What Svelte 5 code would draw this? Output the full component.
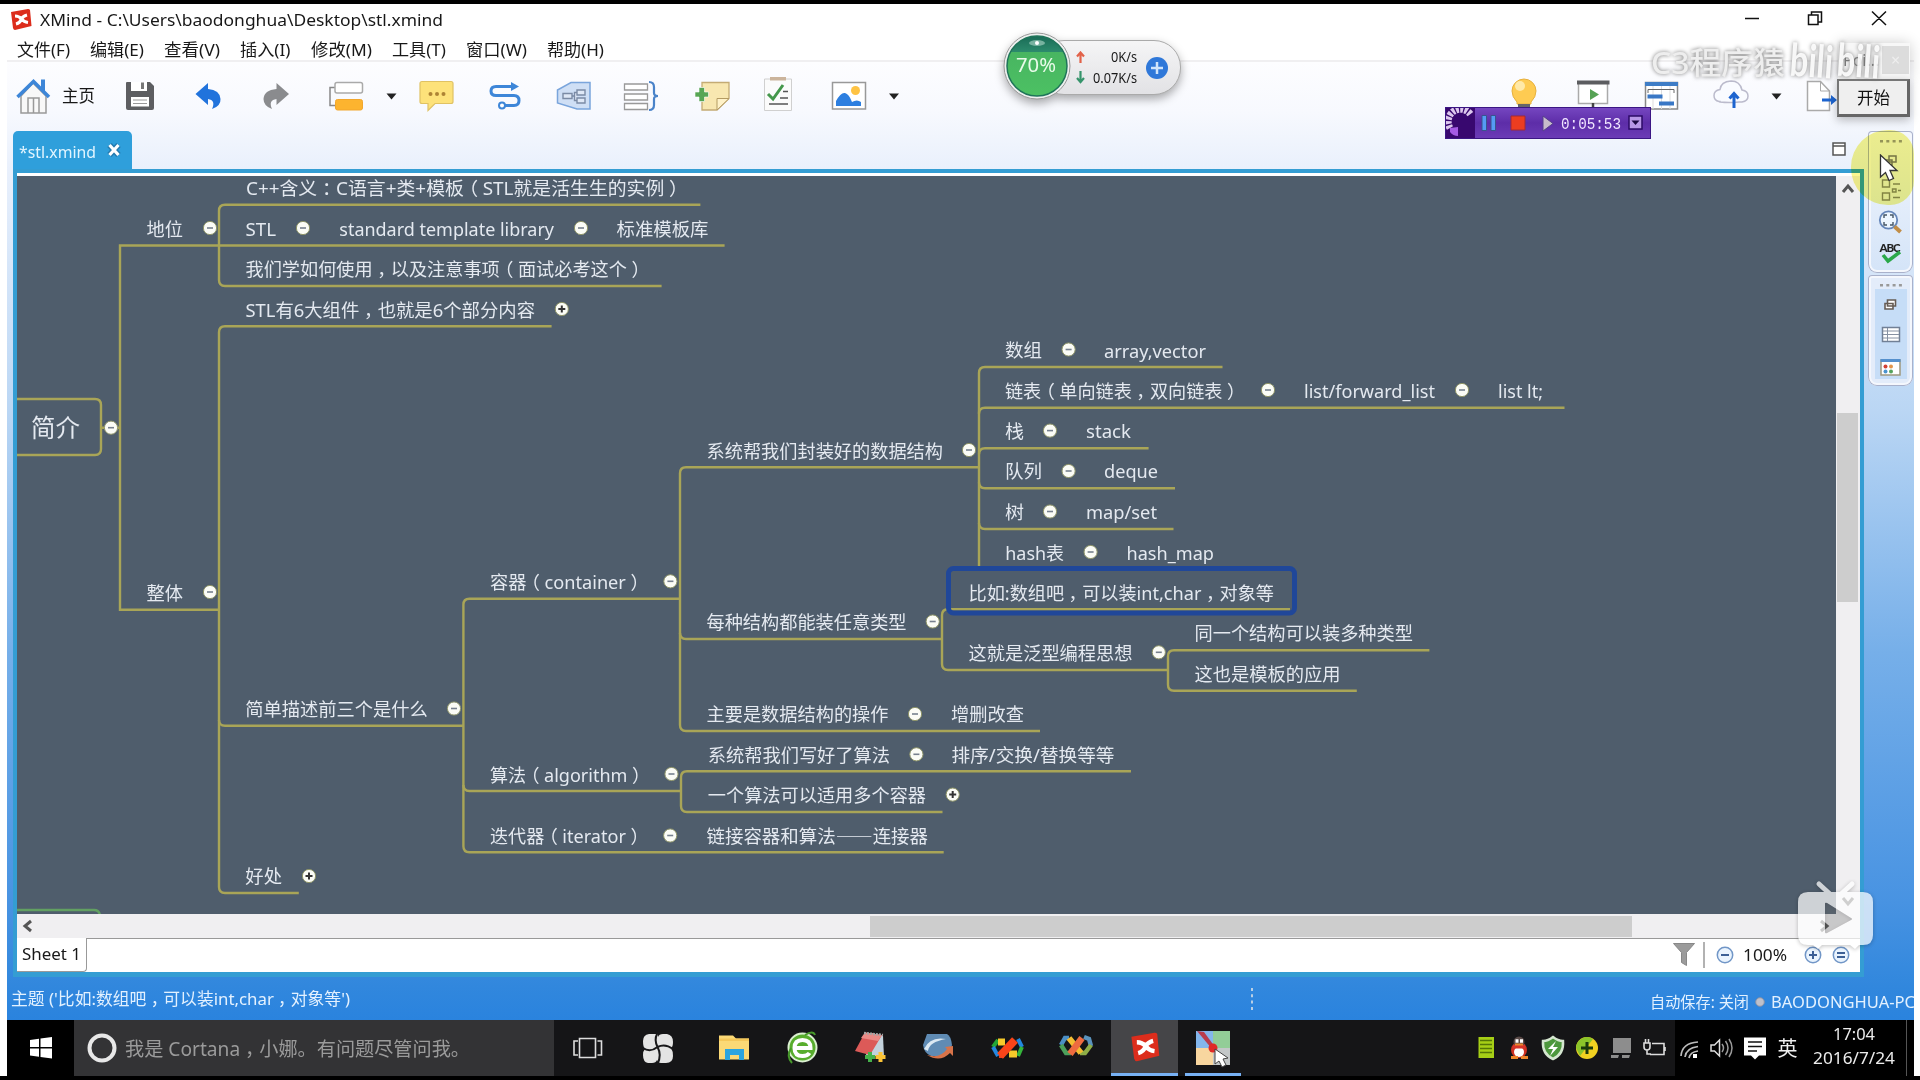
<script>
  const menus = [
    ['文件(F)', 53], ['编辑(E)', 54], ['查看(V)', 56], ['插入(I)', 50.5],
    ['修改(M)', 61], ['工具(T)', 54], ['窗口(W)', 61], ['帮助(H)', 57]
  ];

  // label, left, right, vertical centre
  const topics = [
    ['C++含义：C语言+类+模板（STL就是活生生的实例）', 246, 678.5, 189],
    ['地位', 146.5, 183, 229.5],
    ['STL', 245.5, 276, 229.5],
    ['standard template library', 339.3, 554, 229.5],
    ['标准模板库', 616.5, 708.5, 229.5],
    ['我们学如何使用，以及注意事项（面试必考这个）', 245.5, 640.5, 269.5],
    ['STL有6大组件，也就是6个部分内容', 245.5, 535, 310.5],
    ['整体', 146.5, 183, 593.5],
    ['简单描述前三个是什么', 245.3, 427.8, 710],
    ['好处', 245.3, 282, 877],
    ['容器（container）', 490, 639.5, 582.5],
    ['算法（algorithm）', 490, 641, 775.5],
    ['迭代器（iterator）', 490, 639.5, 837],
    ['系统帮我们封装好的数据结构', 706.5, 943, 451.5],
    ['每种结构都能装任意类型', 706.5, 906.5, 622.5],
    ['主要是数据结构的操作', 706.5, 888.5, 715],
    ['增删改查', 951, 1024, 715],
    ['系统帮我们写好了算法', 707.8, 890, 755.5],
    ['排序/交换/替换等等', 951.5, 1114.5, 755.5],
    ['一个算法可以适用多个容器', 707.8, 926, 796],
    ['链接容器和算法——连接器', 706.5, 928, 837],
    ['数组', 1005, 1042, 351],
    ['array,vector', 1104, 1206, 351.5],
    ['链表（单向链表，双向链表）', 1005, 1236, 391.5],
    ['list/forward_list', 1304, 1435, 391.5],
    ['list lt;', 1498, 1543, 391.5],
    ['栈', 1005, 1024, 431.5],
    ['stack', 1086, 1131, 432],
    ['队列', 1005, 1042, 472],
    ['deque', 1104, 1158, 472],
    ['树', 1005, 1024, 512.5],
    ['map/set', 1086, 1157, 512.5],
    ['hash表', 1005.3, 1064, 553.5],
    ['hash_map', 1126.5, 1214, 553.5],
    ['比如:数组吧，可以装int,char，对象等', 968.5, 1274, 593.5],
    ['这就是泛型编程思想', 968.5, 1132.5, 653.5],
    ['同一个结构可以装多种类型', 1194.5, 1413, 634],
    ['这也是模板的应用', 1194.5, 1340.5, 674.5]
  ];

  const branches = [
    'M700.4 204.7H225Q219 204.7 219 210.7V280Q219 286 225 286H661.6',
    'M724.6 245.5H120V609.7H219',
    'M551.6 326.3H225Q219 326.3 219 332.3V887Q219 893 225 893H298.8',
    'M219 720Q219 725.7 225 725.7H463',
    'M17 399H95Q101 399 101 405V449Q101 455 95 455H17M101 427.7H120',
    'M680 598.7H469.4Q463.4 598.7 463.4 604.7V846.3Q463.4 852.3 469.4 852.3H943.7',
    'M463.4 785Q463.4 791 469.4 791H681',
    'M979 467.3H686Q680 467.3 680 473.3V725Q680 731 686 731H1040',
    'M680 633Q680 639 686 639H942',
    'M1131 771.3H687Q681 771.3 681 777.3V806Q681 812 687 812H942.5',
    'M1222.5 367H985Q979 367 979 373V569',
    'M1564.5 407.7H985Q979 407.7 979 413.7',
    'M1148.6 448.3H985Q979 448.3 979 454.3',
    'M979 482.3Q979 488.3 985 488.3H1175',
    'M979 523Q979 529 985 529H1173.5',
    'M1290 609.3H948Q942 609.3 942 615.3V664Q942 670 948 670H1168',
    'M1429.4 650.3H1174Q1168 650.3 1168 656.3V684.7Q1168 690.7 1174 690.7H1356.8'
  ];

  const folds = [
    [210, 228], [303, 228], [581, 228], [111, 427.7], [210, 592], [454, 708.5],
    [670.4, 581.3], [671.5, 774], [670.2, 835.5], [969, 450], [932.7, 621.5],
    [915, 714], [916.4, 754.3], [1068.6, 349.5], [1268, 390], [1462, 390],
    [1050, 430.6], [1068.6, 471], [1050, 511.5], [1090.6, 552], [1158.8, 652.3]
  ];
  const unfolds = [[561.8, 309], [309, 876], [952.7, 794.6]];
  const dots = [0, 1, 2, 3];

  // Full-width punctuation is set half-width with a quarter em on each side,
  // so that it sits in the middle of its cell.
  function runs(label, size) {
    let after = 0;
    return label.split(/([，：（）]|—+)/).filter(Boolean).map((part) => {
      const half = /[，：（）]/.test(part);
      const pad = half ? size / 4 : 0;
      const dx = after + pad;
      after = pad;
      return { part, dx, kind: half ? 'half' : part[0] === '—' ? 'dash' : undefined };
    });
  }
</script>

{#snippet glyphs(label, size)}{#each runs(label, size) as r}<tspan dx={r.dx} class={r.kind}>{r.part}</tspan>{/each}{/snippet}

{#snippet fit(text, width, size)}
  <svg class="fit" {width} height="28"><text x="0" y={14 + size * 0.375} font-size={size} textLength={width} lengthAdjust="spacingAndGlyphs">{@render glyphs(text, size)}</text></svg>
{/snippet}

{#snippet xlogo()}
  <path d="M0 3L17 0Q18.500 0 19 1L20.500 17L4 21Q2.500 21 2 19Z" fill="#dc2d1c" />
  <path d="M4 7Q8 7 10.500 10Q12 7 16 6M5 15Q9 14 10.500 10Q13 13 17 13.500" fill="none" stroke="#fff" stroke-width="3.200" />
{/snippet}

<div class="screen" lang="zh-CN">
  <div class="window">
    <header class="title">
      <svg width="22" height="22">{@render xlogo()}</svg>
      {@render fit('XMind - C:\\Users\\baodonghua\\Desktop\\stl.xmind', 403, 17)}
      <svg class="controls" width="160" height="24" viewBox="1735 8 160 24" fill="none" stroke="#111" stroke-width="1.500">
        <path d="M1745 18.500h14M1808.500 15h9.500v9.500h-9.500zM1811.500 15v-3h10v10h-3.500M1872 11.500l14 13.500M1886 11.500l-14 13.500" />
      </svg>
    </header>
    <nav class="menu">
      {#each menus as [label, w]}{@render fit(label, w, 16.5)}{/each}
    </nav>

    <div class="body">
      <div class="toolbar">
        <svg viewBox="15 77 43 38"><path d="M21 96V113H46V96L33 83Z" fill="#f8f8f8" stroke="#999" stroke-width="1.500"/><path d="M28 113V98h11v15M33.500 98v15" fill="none" stroke="#999" stroke-width="1.500"/><path d="M17.500 97L33.500 81.500L49 97" fill="none" stroke="#3d86d8" stroke-width="3.500"/><path d="M41 79.500h4v13l-4-4z" fill="#3d86d8"/></svg>
        <div class="home">{@render fit('主页', 33, 16.5)}</div>
        <svg viewBox="109 77 60 38"><path d="M127 82h23l4 4v22q0 2-2 2h-24q-2 0-2-2v-25q0-1 1-1z" fill="#5d5e61"/><path d="M131 82h16v9h-16z" fill="#fff"/><path d="M141 82.500h3v6.500h-3z" fill="#777"/><path d="M131 97h18v9.500h-18z" fill="#fff"/><path d="M133 100h14M133 103.500h14" stroke="#999"/></svg>
        <svg viewBox="169 77 72 38"><path d="M195.500 94L208 83V89Q220 90 220.500 99Q221 106 212 109Q216 100 208 99V105Z" fill="#2173dc"/></svg>
        <svg viewBox="241 77 68 38"><path d="M289 94L276.500 83V89Q264 90 263.500 99Q263.500 106 272 109Q268 100 276.500 99V105Z" fill="#8a8b8e"/></svg>
        <svg viewBox="309 77 70 38"><path d="M335 87.500h-5v18h5" fill="none" stroke="#888" stroke-width="1.500"/><rect x="335" y="82.500" width="27.500" height="10.500" rx="2" fill="#fff" stroke="#aaa" stroke-width="1.500"/><rect x="335.500" y="99.500" width="27" height="10.500" rx="2" fill="#fdb42f" stroke="#f2a72d"/></svg>
        <svg viewBox="379 77 31 38"><path d="M386.500 93.500h10l-5 6z" fill="#222"/></svg>
        <svg viewBox="410 77 63 38"><path d="M422 81.500h29q2 0 2 2v18q0 2-2 2h-16l-7 7v-7h-6q-2 0-2-2v-18q0-2 2-2z" fill="#fde27a" stroke="#e0c263" stroke-width="1.200"/><g fill="#ad8334"><circle cx="430.500" cy="94" r="2"/><circle cx="437" cy="94" r="2"/><circle cx="443.500" cy="94" r="2"/></g></svg>
        <svg viewBox="473 77 67 38"><path d="M512 86.500H496Q491 86.500 491 91T496 95.500H514Q519 95.500 519 100.500T514 105.500H505" fill="none" stroke="#3d86d8" stroke-width="3"/><path d="M511 82l8 4.500-8 4.500z" fill="#3d86d8"/><circle cx="502" cy="105.500" r="3" fill="#fff" stroke="#3d86d8" stroke-width="2"/></svg>
        <svg viewBox="540 77 70 38"><path d="M590 82.500V109H577L557.500 103V90L571 82.500Z" fill="#cfdff5" stroke="#7aa5dc" stroke-width="1.500"/><path d="M563 93.500h9v5h-9zM577 90h8v5h-8zM577 98h8v5h-8zM572 96h2.500M577 92.500h-2.500v8h2.500" fill="#dfe8f6" stroke="#7b8ba5" stroke-width="1.400"/></svg>
        <svg viewBox="610 77 65 38"><path d="M624.500 84h23v6h-23zM624.500 94h23v6h-23zM624.500 103.500h23v6h-23z" fill="#fff" stroke="#999" stroke-width="1.300"/><path d="M649 82q5 0 5 5v6q0 3 4 3q-4 0-4 3v6q0 5-5 5" fill="none" stroke="#4a83c9" stroke-width="2.200"/></svg>
        <svg viewBox="675 77 70 38"><path d="M702 82.500h27v16L717 110h-15z" fill="#f8e7b0" stroke="#c4ab74" stroke-width="1.300"/><path d="M717 110V98.500h12z" fill="#fff2c8" stroke="#b49b63"/><path d="M699 87.500h5.500v4.500h4v5h-4v4.500h-5.500v-4.500h-4v-5h4z" fill="#57a654" stroke="#fff" stroke-width=".6"/></svg>
        <svg viewBox="745 77 65 38"><path d="M764.500 79h27v31.500h-27z" fill="#fbfbfb" stroke="#d0d0d0"/><path d="M770 77h16v3.500h-16z" fill="#cbb49c"/><path d="M768 94l5 5 10-14" fill="none" stroke="#44974b" stroke-width="3"/><path d="M783 91.500h5M780 98h8M769 104h19" stroke="#555" stroke-width="1.600"/></svg>
        <svg viewBox="810 77 70 38"><path d="M832.500 82.500h33v26.500h-33z" fill="#fff" stroke="#999" stroke-width="1.500"/><circle cx="855.500" cy="90.500" r="4.500" fill="#fec344"/><path d="M836 106V101Q841 92 845 93T852 102Q857 99 861 102V106Z" fill="#2d7fe0"/></svg>
        <svg viewBox="880 77 30 38"><path d="M889 93.500h10l-5 6z" fill="#222"/></svg>
        <span></span>
        <svg viewBox="1500 77 60 38"><path d="M1512 91a12 12 0 1 1 24 0q0 6-5 11v2h-14v-2q-5-5-5-11z" fill="#fecb52" stroke="#e7b13f"/><circle cx="1520" cy="86" r="5" fill="#ffe9a8"/><path d="M1518 104h12v5h-12z" fill="#65666b"/></svg>
        <svg viewBox="1560 77 65 38"><path d="M1578.500 83h29v20.500h-29z" fill="#fff" stroke="#aaa" stroke-width="1.500"/><path d="M1577 80.500h32.500v4h-32.500z" fill="#5c5d60"/><path d="M1590 89l9 5.500-9 5.500z" fill="#56a254"/><path d="M1593 103v6" stroke="#444" stroke-width="2.500"/></svg>
        <svg viewBox="1625 77 70 38"><path d="M1645.500 82.500h32v26.500h-32z" fill="#fff" stroke="#888" stroke-width="1.500"/><path d="M1645 82h33v4h-33z" fill="#3f7dc6"/><path d="M1653 86v23M1661.500 86v23M1670 86v23" stroke="#ddd"/><path d="M1648 93v-3.500h26v3.500" fill="none" stroke="#666"/><path d="M1647.500 94.500h15v4h-15zM1659 101.500h15v4h-15z" fill="#3977c5"/></svg>
        <svg viewBox="1695 77 65 38"><path d="M1720 101.500h-1q-5-1-5-6t6-6q1-8 11-8.500q9 0 11 9q6 1 6 6t-6 6h-3q-10 1-19 0z" fill="#f9fbff" stroke="#bbc" stroke-width="1.500"/><path d="M1734 108V95M1729.500 98.500l4.500-5 4.500 5" fill="none" stroke="#1d64cf" stroke-width="3"/></svg>
        <svg viewBox="1760 77 32 38"><path d="M1771.500 93.500h10l-5 6z" fill="#222"/></svg>
        <svg viewBox="1792 77 48 38"><path d="M1807.500 81.500h13l9 9.500v19.500h-22z" fill="#fff" stroke="#aaa" stroke-width="1.500"/><path d="M1820.500 81.500v9.500h9" fill="none" stroke="#aaa"/><path d="M1822 98.500h9v-3.500l6 5-6 5v-3.500h-9z" fill="#1d64cf"/></svg>
      </div>

      <div class="main">
        <div class="column">
          <div class="tabs">
            <div class="tab">
              {@render fit('*stl.xmind', 77, 16.5)}
              <svg width="14" height="14"><path d="M2.500 2L11.500 12M11.500 2L2.500 12" stroke="#247aae" stroke-width="6"/><path d="M2.500 2L11.500 12M11.500 2L2.500 12" stroke="#fff" stroke-width="3.200"/></svg>
            </div>
            <svg class="maximize" width="14" height="14"><path d="M1 1h12v12H1zM1 4h12" fill="#fff" stroke="#555" stroke-width="1.500"/></svg>
          </div>
          <div class="editor">
            <div class="viewport">
              <svg class="map" width="1819" height="738" viewBox="17 176 1819 738">
                {#each branches as d}<path {d} class="branch" />{/each}
                <path d="M17 910H94Q99 910 100 915" class="branch green" />
                <rect x="948.500" y="568.500" width="346" height="44.500" rx="5" class="selection" />
                {#each folds as [x, y]}
                  <circle cx={x} cy={y} r="6.600" class="fold" />
                  <path d="M{x - 3} {y}h6" class="sign" />
                {/each}
                {#each unfolds as [x, y]}
                  <circle cx={x} cy={y} r="6.600" class="fold" />
                  <path d="M{x - 3.5} {y}h7M{x} {y - 3.5}v7" class="sign plus" />
                {/each}
                {#each topics as [label, x, end, y]}
                  <text {x} y={y + 6} textLength={end - x} lengthAdjust="spacingAndGlyphs">{@render glyphs(label, 18)}</text>
                {/each}
                <text x="31" y="437" class="big" textLength="49">简介</text>
              </svg>
              <div class="vscroll">
                <svg width="24" height="24"><path d="M7 16l5-6 5 6" fill="none" stroke="#555" stroke-width="3"/></svg>
                <div class="vthumb"></div>
                <svg class="down" width="24" height="24"><path d="M7 8l5 6 5-6" fill="none" stroke="#555" stroke-width="3"/></svg>
              </div>
            </div>
            <div class="hscroll">
              <svg width="24" height="24"><path d="M14 7l-6 5 6 5" fill="none" stroke="#555" stroke-width="3"/></svg>
              <div class="hthumb"></div>
              <svg class="right" width="24" height="24"><path d="M8 7l6 5-6 5" fill="none" stroke="#444" stroke-width="3"/></svg>
            </div>
            <div class="sheets">
              <div class="sheet">{@render fit('Sheet 1', 59, 17)}</div>
              <div class="zoom">
                <svg width="50" height="32" viewBox="1665 939 50 32"><path d="M1673.500 943.500h21l-8 9v13l-5-3v-10z" fill="#9b9b9b" stroke="#888"/><path d="M1704 942v26" stroke="#999" stroke-width="1.500"/></svg>
                <svg width="20" height="20"><circle cx="10" cy="10" r="7.700" class="ring"/><path d="M6 10h8" class="mark"/></svg>
                {@render fit('100%', 44, 16.5)}
                <svg class="more" width="20" height="20"><circle cx="10" cy="10" r="7.700" class="ring"/><path d="M6 10h8M10 6v8" class="mark"/></svg>
                <svg class="even" width="20" height="20"><circle cx="10" cy="10" r="7.700" class="ring"/><path d="M6 8h8M6 12h8" class="mark"/></svg>
              </div>
            </div>
          </div>
        </div>

        <aside>
          <div class="panel first">
            <svg width="45" height="142" viewBox="1868 131 45 142" fill="none">
              {#each dots as i}<rect x={1880 + i * 6.3} y="140" width="3" height="2.500" fill="#999"/>{/each}
              <path d="M1889 156h7v6h-7zM1884 160h8v5h-8z" stroke="#777" stroke-width="1.500"/>
              <path d="M1882.500 180h7v7h-7zM1882.500 193h7v7h-7zM1893 184h7M1892.500 189h3.500v3h-3.500zM1898 190.500h3M1893 197.500h7" stroke="#858977" stroke-width="1.400"/>
              <circle cx="1888.500" cy="220" r="8.700" fill="#edf6ff" stroke="#6586b9" stroke-width="1.800"/>
              <path d="M1884 218v-3h3M1890 215h3v3M1893 222v3h-3M1887 225h-3v-3" stroke="#456" stroke-width="1.400"/><path d="M1894.500 226.500l6 5.500" stroke="#c18d47" stroke-width="4"/>
              <text x="1879.500" y="251.500" textLength="21" class="abc">ABC</text><path d="M1883 255l5 6 12-9" stroke="#2ba849" stroke-width="3.500"/>
            </svg>
          </div>
          <div class="panel">
            <svg width="45" height="111" viewBox="1868 275 45 111" fill="none">
              <rect x="1875" y="289" width="32" height="90" fill="#c6ddf7"/>
              {#each dots as i}<rect x={1880 + i * 6.3} y="284" width="3" height="2.500" fill="#999"/>{/each}
              <path d="M1887.500 300h8v6h-8zM1885 303.500h8v5.500h-8z" fill="#fff" stroke="#665c54" stroke-width="1.600"/>
              <path d="M1882.500 327.500h17v14h-17z" fill="#fff" stroke="#718096" stroke-width="1.500"/><path d="M1883 331h16M1883 334.500h16M1883 338h16M1887.500 328v13" stroke="#8791a2"/>
              <path d="M1881 360h19v15h-19z" fill="#fff" stroke="#9f987f" stroke-width="1.500"/><path d="M1880.500 360.500h20" stroke="#5590cd" stroke-width="3"/><circle cx="1885.500" cy="366.500" r="2" fill="#d24235"/><circle cx="1891" cy="366.500" r="2" fill="#e2954b"/><circle cx="1885.500" cy="371.500" r="2" fill="#4b94cf"/><circle cx="1891" cy="371.500" r="2" fill="#55a35d"/>
            </svg>
          </div>
        </aside>
      </div>

      <footer class="status">
        {@render fit("主题 ('比如:数组吧，可以装int,char，对象等')", 339, 16.5)}
        <svg class="grip" width="4" height="24"><path d="M2 1v22" stroke="#b9cfe5" stroke-width="2" stroke-dasharray="3 3.300"/></svg>
        <div class="save">
          {@render fit('自动保存: 关闭', 99, 15.5)}
          <svg width="10" height="10"><circle cx="5" cy="5" r="4.300" fill="#bfc0ca" stroke="#8790a5"/></svg>
          {@render fit('BAODONGHUA-PC', 144, 15.5)}
        </div>
      </footer>
    </div>
  </div>

  <div class="taskbar">
    <div class="start"><svg width="24" height="24"><path d="M1 4l9-1.300v8.300H1zM11.500 2.500L23 1v10H11.500zM1 12.500h9v8.300L1 19.500zM11.500 12.500H23v10l-11.500-1.500z" fill="#fff"/></svg></div>
    <div class="search">
      <svg width="32" height="32"><circle cx="16" cy="16" r="12.500" fill="none" stroke="#e8e8e8" stroke-width="4"/></svg>
      {@render fit('我是 Cortana，小娜。有问题尽管问我。', 345, 19.5)}
    </div>
    <svg width="557" height="56" viewBox="554 1020 557 56">
      <path d="M579.500 1038.500h16v19h-16zM578 1041h-4v14h4M597.500 1041h4v14h-4" fill="none" stroke="#ddd" stroke-width="1.600"/>
      <path d="M649 1034h7q2 0 2 3 1-3 5-3h4q6 1 6 8 0 5-2 6 2 3 2 8 0 7-7 7h-5q-3 0-4-3-1 3-5 3h-4q-5-1-5-8 0-4 2-6-2-2-2-8 0-6 6-7z" fill="#e4e4e4"/>
      <path d="M657 1034Q654 1040 657.500 1047Q665 1043 673 1049M643 1048Q650 1053 657.500 1047Q662 1055 657.500 1064" fill="none" stroke="#18181a" stroke-width="2"/>
      <path d="M719 1035.500h14l3 3h13v21h-30z" fill="#fbd976"/><path d="M719 1041h30v-2.500h-30z" fill="#f5c85a"/><path d="M725 1049h19v11h-5v-5h-9v5h-5z" fill="#2ba4df"/>
      <circle cx="802.500" cy="1047.500" r="14" fill="#58ad2d" stroke="#dbf0d1" stroke-width="2"/><path d="M794 1048h16.500q0-8-8-8t-8 8q0 8 8 8 5 0 7-3" fill="none" stroke="#fff" stroke-width="4"/><path d="M792 1063Q786 1056 791 1048M805 1035Q813 1030 815 1035" fill="none" stroke="#46982a" stroke-width="2"/>
      <path d="M872 1033l11 3 1 21-18-2z" fill="#c3d2dc"/><path d="M865 1032.500l17 2.500-12 20-15-4z" fill="#dc5a58"/><path d="M865 1032.500l17 2.500-4 6-17-3z" fill="#ec8a86"/><path d="M864 1033l19 2" stroke="#a5a5a5" stroke-width="2.500" stroke-dasharray="2 1"/><path d="M870 1052v10M865 1057h10" stroke="#44b04a" stroke-width="4"/><path d="M880.500 1052v10M875.500 1057h10" stroke="#fcc437" stroke-width="4"/>
      <path d="M927 1034h20q4 2 5 11-2 10-9 11h-12q-7-3-8-11z" fill="#5f8bb4"/><path d="M924 1049Q930 1036 946 1039Q929 1042 928 1051Z" fill="#dbe8f2"/><path d="M927 1055Q940 1059 947 1049L945 1047 953 1046 953 1056 950 1053Q940 1063 927 1055Z" fill="#d77349"/>
      <g fill="none" stroke-width="4"><path d="M998 1040l-5 7" stroke="#23a536"/><path d="M993 1047l5 9" stroke="#2387df"/><path d="M1018 1039l4 8" stroke="#2387df"/><path d="M1022 1047l-4 9" stroke="#35b53b"/><path d="M998 1042h7M1009 1054h8" stroke="#f6ca2a" stroke-width="7"/><path d="M999 1056l5 0" stroke="#e84020" stroke-width="4"/><path d="M1000 1056l15-16" stroke="#fa4419" stroke-width="8"/></g>
      <g fill="none" stroke-width="4.500"><path d="M1069 1038h-4l-4 7" stroke="#4c8fc5"/><path d="M1061 1045l5 8h5" stroke="#4ca05b"/><path d="M1084 1037l5 2 2 7" stroke="#5a93bd"/><path d="M1091 1045l-6 8h-5" stroke="#8fae47"/><path d="M1069 1038l12 15" stroke="#f3bd32" stroke-width="6"/><path d="M1070 1054l12-16" stroke="#ee6b3f" stroke-width="6.500"/></g>
    </svg>
    <div class="active"><svg width="34" height="34" viewBox="-2 -2 24 25">{@render xlogo()}</svg></div>
    <div class="pointer"><svg width="36" height="40" viewBox="1195 1028 36 40"><path d="M1196 1031h17v17h-17z" fill="#84b6ec"/><path d="M1213 1031h17v17h-17z" fill="#92cd97"/><path d="M1196 1048h17v17h-17z" fill="#f8d69f"/><path d="M1213 1048h17v17h-17z" fill="#c3c7c8"/><path d="M1197 1031l7 1 11 15-3 2z" fill="#b93c4c"/><circle cx="1213" cy="1048" r="4.500" fill="#e02a27"/><path d="M1215 1049v15l4-3 3 6 4-2-3-6 5-1z" fill="#fff" stroke="#444"/></svg></div>
    <svg class="tray" width="200" height="56" viewBox="1475 1020 200 56">
      <path d="M1478.500 1037h15.500v21h-15.500z" fill="#a6cf16"/><path d="M1480 1040.500h12M1480 1044.500h12M1480 1048.500h12M1480 1052.500h12" stroke="#547606" stroke-width="1.400"/>
      <ellipse cx="1519" cy="1050" rx="8" ry="8" fill="#ce3122"/><ellipse cx="1519" cy="1052" rx="5" ry="5" fill="#fff"/><circle cx="1519" cy="1042" r="5.500" fill="#5a4a48"/><path d="M1515.500 1041h3M1520 1041h3" stroke="#fff" stroke-width="3.500"/><path d="M1513 1045h12v3.500h-12z" fill="#d8352a"/><path d="M1515 1043.500h8v2h-8zM1511 1056h7v3h-7zM1521 1056h7v3h-7z" fill="#ed872b"/>
      <path d="M1553 1037q5 4 10 4 1 13-10 18-11-5-10-18 5 0 10-4z" fill="#4d983d" stroke="#d5e6d0" stroke-width="2.500"/><path d="M1556 1041l-8 8h5l-3 7 8-9h-5z" fill="#fff"/>
      <circle cx="1587" cy="1048" r="11" fill="#f1d121"/><path d="M1576 1048a11 11 0 0 1 17-9L1580 1056z" fill="#8bc42a"/><path d="M1587 1042v12M1581 1048h12" stroke="#1b3a0c" stroke-width="3"/>
      <path d="M1613 1038h18v15h-18zM1611 1055h8l-1 3h-7zM1622 1055h8l-1 3h-7z" fill="#8d8d8d"/>
      <path d="M1652 1043.500h12v11h-14M1665 1047v4M1644 1043v4q0 3 3 3t3-3v-4zM1645.500 1039v4M1648.500 1039v4M1647 1050v4h4" fill="none" stroke="#ddd" stroke-width="1.600"/>
    </svg>
    <svg class="system" width="125" height="56" viewBox="1675 1020 125 56">
      <path d="M1681 1056Q1682 1043 1698 1042M1685 1057Q1686 1048 1698 1046.500M1689 1058Q1690 1052 1698 1051" fill="none" stroke="#bbb" stroke-width="1.700"/><path d="M1693 1054h4v4h-4z" fill="#fff"/>
      <path d="M1711 1045h3.500l5-5v16l-5-5h-3.500z" fill="none" stroke="#ddd" stroke-width="1.500"/><path d="M1722 1044q3 4 0 8M1725.500 1041q5 7 0 14M1729 1039q6 9 0 18" fill="none" stroke="#999" stroke-width="1.500"/>
      <path d="M1744 1037.500h22v18h-7l-4 4-4-4h-7z" fill="#fff"/><path d="M1748 1042h14M1748 1046.500h14M1748 1051h9" stroke="#111" stroke-width="1.700"/>
      <text x="1777.500" y="1056" font-size="20" fill="#eee">英</text>
    </svg>
    <div class="clock">{@render fit('17:04', 42, 17)}{@render fit('2016/7/24', 82, 17)}</div>
  </div>

  <!-- floating network monitor -->
  <div class="monitor">
    <div class="rates">
      <svg width="10" height="34"><path d="M4.500 12V2M1 5.500L4.500 1.500 8 5.500" fill="none" stroke="#e26249" stroke-width="2.200"/><path d="M4.500 20v10M1 27l3.500 4L8 27" fill="none" stroke="#36946b" stroke-width="2.200"/></svg>
      <div class="speeds">{@render fit('0K/s', 26, 14)}{@render fit('0.07K/s', 44, 14)}</div>
      <svg width="24" height="24"><circle cx="12" cy="12" r="11" fill="#2f78d9"/><path d="M12 6v12M6 12h12" stroke="#cfe4fb" stroke-width="2.500"/></svg>
    </div>
    <svg class="gauge" width="68" height="70">
      <defs><linearGradient id="ball" x2="0" y2="1"><stop offset="0" stop-color="#1a6b57"/><stop offset=".26" stop-color="#2c8a6c"/><stop offset=".27" stop-color="#48b561"/><stop offset="1" stop-color="#4cc163"/></linearGradient></defs>
      <circle cx="34" cy="34" r="33" fill="#eef0ef" stroke="#999"/><circle cx="34" cy="34" r="30" fill="url(#ball)" stroke="#1e7459" stroke-width="1.500"/><ellipse cx="34" cy="11" rx="8" ry="3" fill="#9bcabb" opacity=".7"/><circle cx="34" cy="11" r="2" fill="#fff"/>
      <text x="13" y="39.500" textLength="40" lengthAdjust="spacingAndGlyphs" font-size="19.500" fill="#e8fbe9">70%</text>
    </svg>
  </div>

  <div class="popup"><span>Poi...</span><div>×</div></div>
  <button class="begin">{@render fit('开始', 33, 17)}</button>
  <svg class="watermark" width="250" height="56" viewBox="1645 36 250 56">
    <text x="1651" y="74" font-size="31" textLength="134" lengthAdjust="spacingAndGlyphs">C3程序猿</text>
    <g class="brand">
      <text x="1790" y="77" textLength="43" lengthAdjust="spacingAndGlyphs" transform="rotate(4 1811 62)">bili</text>
      <text x="1837" y="77" textLength="43" lengthAdjust="spacingAndGlyphs" transform="rotate(4 1858 62)">bili</text>
    </g>
  </svg>

  <div class="recorder">
    <svg width="29" height="30"><rect width="29" height="30" fill="#38086f"/><path d="M4 20a12 12 0 0 1 21-13" fill="none" stroke="#dcc8ee" stroke-width="7" stroke-dasharray="3 1.300"/><path d="M4 20l8-1v9q-5 0-8-4z" fill="#a55be5"/></svg>
    <svg width="86" height="30" viewBox="1475 108 86 30"><path d="M1482 115.500h4.500v15h-4.500zM1491 115.500h4.500v15h-4.500z" fill="#559cf4" stroke="#39548f"/><path d="M1511 116h14v14h-14z" fill="#ec3d20" stroke="#a12b36"/><path d="M1543 116l10 7.500-10 7.500z" fill="#c7bdcb" stroke="#55408a"/></svg>
    {@render fit('0:05:53', 60, 16)}
    <svg class="drop" width="16" height="16"><path d="M1 1h13v13H1z" fill="#b897e7" stroke="#2d0b67" stroke-width="1.500"/><path d="M3.500 5.500h8l-4 4.500z" fill="#1c0842"/></svg>
  </div>

  <div class="halo"></div>
  <svg class="cursor" width="22" height="30"><path d="M1.500 1v22l5-4.500 3.500 8 4.500-2-3.500-8h7z" fill="#fff" stroke="#333" stroke-width="1.300"/></svg>
  <svg class="player" width="80" height="72" viewBox="1796 880 80 72">
    <path d="M1819 884l12 11M1852 884l-12 11" stroke="#fff" stroke-width="5" stroke-linecap="round"/>
    <path fill-rule="evenodd" d="M1808 892h55q10 0 10 10v33q0 10-10 10h-55q-10 0-10-10v-33q0-10 10-10zM1827 903q-2-1-2 1v28q0 2 2 1l24-13q2-1 0-2z" fill="#fff"/>
    <path d="M1827 903q-2-1-2 1v28q0 2 2 1l24-13q2-1 0-2z" fill="#888" opacity=".35"/>
    <path d="M1813 945h9l-4 4zM1850 945h9l-4 4z" fill="#fff"/>
  </svg>
</div>

<style>
  :global(body) { margin: 0; overflow: hidden; }
  .screen { position: relative; box-sizing: border-box; width: 1920px; height: 1080px; overflow: hidden; background: #fff; border-top: 4px solid #000; border-bottom: 4px solid #000; font-family: "Noto Sans", "Noto Sans CJK SC", sans-serif; color: #181818; }
  svg { display: block; flex: none; }
  .fit { overflow: visible; fill: currentColor; }
  .half { font-family: "Noto Sans CJK SC", sans-serif; font-feature-settings: "halt"; }
  .dash { font-family: "Noto Sans CJK SC", sans-serif; }
  .window { margin-left: 7px; width: 1907px; height: 1016px; display: flex; flex-direction: column; }
  .title { height: 29px; display: flex; align-items: center; padding: 3px 19px 0 4px; box-sizing: border-box; gap: 7px; }
  .controls { margin-left: auto; margin-bottom: 1px; }
  .menu { height: 29px; display: flex; align-items: center; padding: 6px 0 0 10px; box-sizing: border-box; gap: 20px; border-bottom: 2px solid #f0eff1; }
  .body { height: 958px; display: flex; flex-direction: column; background: linear-gradient(#fdfdff 0, #f7f9fe 50px, #e9f0fc 107px, #bad6f4 350px, #76afe9 590px, #4893e2 840px, #3187dd 925px, #2a83de 958px); }
  .toolbar { display: grid; height: 38px; padding: 15px 0 16px 8px; grid-template-columns: 43px 51px 60px 72px 68px 70px 31px 63px 67px 70px 65px 70px 65px 70px 30px 590px 60px 65px 70px 65px 32px 48px; }
  .home { padding: 5px 0 0 4px; }
  .main { display: flex; height: 846px; }
  .column { width: 1857px; display: flex; flex-direction: column; padding-left: 6px; box-sizing: border-box; }
  .tabs { height: 38px; display: flex; justify-content: space-between; align-items: flex-start; }
  .tab { width: 119px; height: 38px; box-sizing: border-box; padding: 4px 0 0 6px; display: flex; align-items: center; gap: 11px; border-radius: 5px 5px 0 0; background: #2f9fdb; color: #e2f5ff; }
  .tab svg:last-child { margin-bottom: 4px; }
  .maximize { margin: 11px 18px 0 0; }
  .editor { height: 808px; box-sizing: border-box; border: 4px solid #349dd3; border-bottom-width: 5px; background: #fff; }
  .viewport { display: flex; padding-top: 3px; }
  .map { background: #4f5d6c; }
  .map text { font-size: 18px; fill: #e4e9f0; }
  .map .big { font-size: 24.500px; }
  .branch { fill: none; stroke: #a9a557; stroke-width: 2.400; }
  .green { stroke: #62a062; }
  .selection { fill: none; stroke: #204799; stroke-width: 5; }
  .fold { fill: #fbfcf6; stroke: #8e9468; stroke-width: 1; }
  .sign { stroke: #77808e; stroke-width: 1.600; }
  .plus { stroke: #333; stroke-width: 2; }
  .vscroll { width: 24px; height: 738px; background: #f0eff1; display: flex; flex-direction: column; }
  .vthumb { width: 21px; height: 189px; margin: 213px 0 0 1px; background: #cdcdcd; }
  .down { margin-top: auto; }
  .hscroll { height: 24px; display: flex; align-items: center; background: #f0eff1; }
  .hthumb { width: 762px; height: 21px; margin-left: 829px; background: #cdcdcd; }
  .right { margin-left: auto; margin-right: 23px; }
  .sheets { height: 34px; display: flex; }
  .sheet { width: 70px; box-sizing: border-box; padding: 2px 0 0 5px; border-right: 1.500px solid #999; border-bottom: 1px solid #999; border-radius: 0 0 4px 0; }
  .zoom { flex: 1; display: flex; align-items: center; justify-content: flex-end; padding: 0 9px 2px 0; border-top: 1.500px solid #999; }
  .zoom .fit { margin-left: 8px; }
  .more { margin-left: 16px; }
  .even { margin-left: 8px; }
  .ring { fill: #eaf4fe; stroke: #7196c7; stroke-width: 1.500; }
  .mark { stroke: #3d6096; stroke-width: 2; }
  aside { width: 50px; padding-left: 4px; box-sizing: border-box; display: flex; flex-direction: column; gap: 2px; }
  .panel { width: 45px; height: 111px; box-sizing: border-box; border-radius: 4px 4px 9px 9px; background: #e3ecfa; box-shadow: inset 0 0 0 1px #a9b1cb, inset 0 0 0 3px #f4f7fd; }
  .first { height: 142px; background: linear-gradient(#f3f6fd, #d4e4f8); }
  .abc { font: 900 11.500px Lato, sans-serif; fill: #222; }
  .status { height: 43px; display: flex; align-items: center; padding: 1px 0 0 4px; box-sizing: border-box; color: #e3f1ff; overflow: hidden; }
  .grip { margin-left: 900px; }
  .save { margin-left: auto; margin-right: -1px; padding-top: 5px; display: flex; align-items: center; gap: 6px; }
  .taskbar { margin-left: 7px; width: 1907px; height: 56px; display: flex; background: #151517; color: #ececec; }
  .start { width: 67px; background: #000; display: grid; place-items: center; }
  .search { width: 480px; display: flex; align-items: center; gap: 7px; padding-left: 11.500px; box-sizing: border-box; background: #333335; color: #9b9b9b; }
  .search .fit { margin-top: 2px; }
  .active { width: 67px; background: #454548; border-bottom: 3px solid #77b1f4; box-sizing: border-box; display: grid; place-items: center; }
  .pointer { width: 56px; margin-left: 7px; box-sizing: border-box; border-bottom: 3px solid #77b1f4; padding: 8px 0 0 10px; }
  .tray { margin-left: auto; }
  .system { background: #000; }
  .clock { width: 114px; box-sizing: border-box; background: #000; box-shadow: inset -7px 0 #000, inset -8px 0 #555; display: flex; flex-direction: column; align-items: center; padding: 0 6px 0 0; }
  .clock .fit { margin-bottom: -4.500px; }
  .monitor { position: absolute; left: 1003px; top: 28px; width: 178px; height: 70px; filter: drop-shadow(0 4px 5px #0005); }
  .rates { height: 55px; margin: 8px 0 0 34px; box-sizing: border-box; border: 1px solid #aaa; border-radius: 27px; background: linear-gradient(#f5f5f6, #e2e2e5); padding: 0 8px 0 38px; display: flex; align-items: center; gap: 8px; }
  .rates > svg:first-child { margin-right: -3px; }
  .rates > svg:last-child { margin-right: -3px; }
  .speeds { width: 46px; display: flex; flex-direction: column; align-items: flex-end; }
  .speeds .fit { margin: -3.500px 0; }
  .gauge { position: absolute; left: 0; top: 0; }
  .popup { position: absolute; left: 1838px; top: 39px; width: 72px; height: 36px; box-sizing: border-box; background: #f7f7f7; box-shadow: 0 0 14px #0003; display: flex; justify-content: space-between; padding: 3px 1px 5px 5px; font-size: 16px; line-height: 28px; color: #777; }
  .popup div { width: 27px; background: #dcdcdc; color: #eee; text-align: center; }
  .begin { position: absolute; left: 1837px; top: 75px; width: 73px; height: 38px; box-sizing: border-box; display: grid; place-items: center; padding: 0; border: 2px solid #777; border-right: 3px solid #666; border-bottom: 3px solid #666; background: #efefef; color: #111; box-shadow: 0 3px 9px #0004; font-family: inherit; }
  .watermark { position: absolute; left: 1645px; top: 32px; overflow: visible; fill: #eee; font-weight: 500; filter: drop-shadow(0 0 2px #777); }
  .brand { font-family: Lato, sans-serif; font-weight: 700; font-size: 45px; fill: #fff; opacity: .9; }
  .recorder { position: absolute; left: 1445px; top: 103px; width: 206px; height: 32px; box-sizing: border-box; border: 1.500px solid #3b1684; display: flex; align-items: center; background: linear-gradient(#7546c0, #5d2da8 50%, #6b3bb6); color: #f0e5ff; font-family: "Liberation Mono", monospace; }
  .drop { margin-left: 7px; }
  .halo { position: absolute; left: 1851px; top: 126px; width: 63px; height: 75px; background: #f4f04c; opacity: .62; border-radius: 37px 24px 24px 37px; mix-blend-mode: multiply; }
  .cursor { position: absolute; left: 1879px; top: 150px; }
  .player { position: absolute; left: 1796px; top: 876px; opacity: .72; filter: drop-shadow(0 1px 2px #0005); }
</style>
